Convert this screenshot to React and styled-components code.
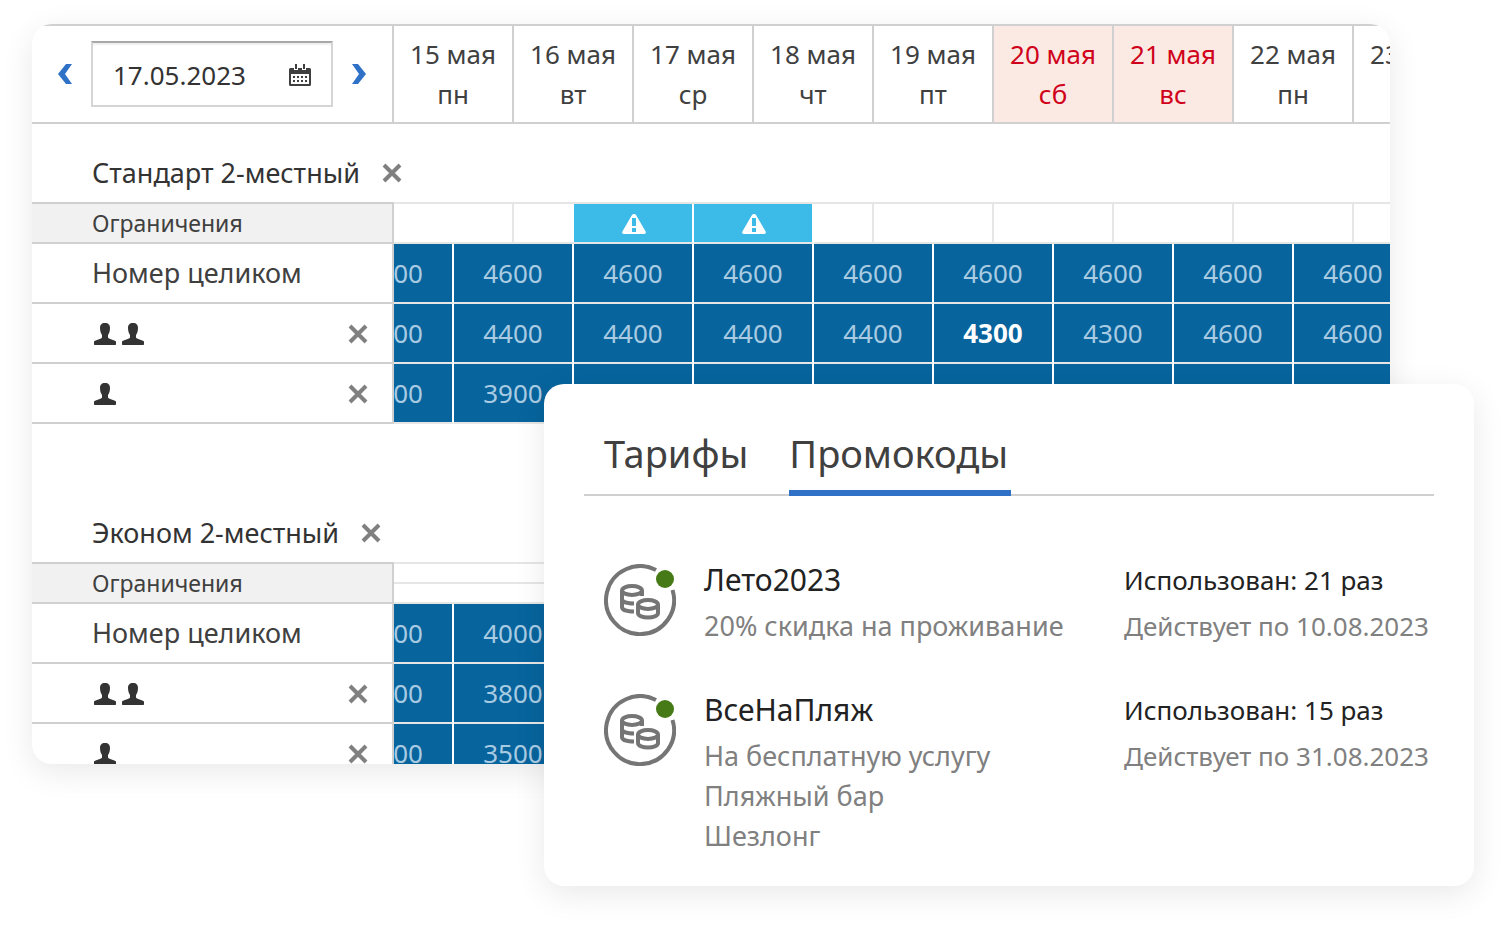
import React from "react";
import styled, { createGlobalStyle, css } from "styled-components";

const dates = [
  { date: "15 мая", day: "пн" },
  { date: "16 мая", day: "вт" },
  { date: "17 мая", day: "ср" },
  { date: "18 мая", day: "чт" },
  { date: "19 мая", day: "пт" },
  { date: "20 мая", day: "сб", weekend: true },
  { date: "21 мая", day: "вс", weekend: true },
  { date: "22 мая", day: "пн" },
  { date: "23 мая" }
];

// a date takes two columns, a night starts in the middle of its date
const restrictions = [
  { span: 2 },
  { span: 1, open: true },
  { span: 2, warning: true },
  { span: 2, warning: true },
  { span: 1 },
  { span: 2 },
  { span: 2 },
  { span: 2 },
  { span: 2 },
  { span: 2 }
];

const rooms = [
  {
    name: "Стандарт 2-местный",
    restrictions,
    rates: [
      {
        label: "Номер целиком",
        prices: [4600, 4600, 4600, 4600, 4600, 4600, 4600, 4600, 4600]
      },
      {
        guests: 2,
        prices: [4400, 4400, 4400, 4400, 4400, 4300, 4300, 4600, 4600],
        changed: 5
      },
      { guests: 1, prices: [3900, 3900] }
    ]
  },
  {
    name: "Эконом 2-местный",
    rates: [
      { label: "Номер целиком", prices: [4000, 4000] },
      { guests: 2, prices: [3800, 3800] },
      { guests: 1, prices: [3500, 3500] }
    ]
  }
];

const promocodes = [
  {
    name: "Лето2023",
    details: ["20% скидка на проживание"],
    used: "Использован: 21 раз",
    until: "Действует по 10.08.2023"
  },
  {
    name: "ВсеНаПляж",
    details: ["На бесплатную услугу", "Пляжный бар", "Шезлонг"],
    used: "Использован: 15 раз",
    until: "Действует по 31.08.2023"
  }
];

const GlobalStyle = createGlobalStyle`
  *, *::before, *::after {
    box-sizing: border-box;
  }
  body {
    margin: 0;
    background: #fff;
    color: #404040;
    font-family: "Noto Sans", "Open Sans", sans-serif;
    font-size: 26px;
    line-height: 40px;
  }
  button, input {
    font: inherit;
    color: inherit;
  }
  th, td {
    padding: 0;
    font-weight: 400;
  }
`;

const Page = styled.main`
  display: grid;
  grid-template-columns: 512px minmax(0, 1fr) 84px;
  grid-template-rows: 360px 380px auto;
  padding: 24px 32px 40px;
`;

const Card = styled.section`
  background: #fff;
  border-radius: 20px;
  box-shadow: 0 8px 32px rgba(0, 0, 0, 0.09);
`;

const Calendar = styled(Card)`
  grid-column: 1 / 3;
  grid-row: 1 / 3;
  overflow: hidden;
`;

const Grid = styled.table`
  width: 1442px;
  table-layout: fixed;
  border-collapse: separate;
  border-spacing: 0;
`;

const LabelCol = styled.col`
  width: 362px;
`;

const HalfDayCol = styled.col`
  width: 60px;
`;

const PickerCell = styled.td`
  height: 100px;
  border: solid #d0d0d0;
  border-width: 2px 2px 2px 0;
`;

const Picker = styled.div`
  display: flex;
  align-items: center;
  justify-content: center;
  gap: 19px;
`;

const IconButton = styled.button`
  display: inline-flex;
  padding: 0;
  border: 0;
  background: none;
  color: ${props => props.$color || "#808080"};
  cursor: pointer;
`;

const DateField = styled.div`
  display: flex;
  align-items: center;
  width: 242px;
  height: 66px;
  padding: 2px 20px 0;
  border: 2px solid #d5d5d5;
  border-top-color: #a8a8a8;
  box-shadow: inset 0 2px 1px #f0f0f0;
`;

const DateInput = styled.input`
  flex: 1;
  min-width: 0;
  padding: 0;
  border: 0;
  outline: 0;
  background: none;
  color: #333;
`;

const DateCell = styled.th`
  height: 100px;
  border: solid #d0d0d0;
  border-width: 2px 2px 2px 0;
  vertical-align: top;
  ${props =>
    props.$weekend &&
    css`
      background: #fbe9e3;
      color: #d0021b;
    `}
`;

const DateLine = styled.span`
  display: block;
  &:first-child {
    padding-top: 8px;
  }
`;

const lightLine = "2px solid #e6e6e6";
const darkLine = "2px solid #d0d0d0";

const RoomLabel = styled.th`
  height: 80px;
  padding-left: 60px;
  border-bottom: ${darkLine};
  font-size: 27px;
  text-align: left;
  white-space: nowrap;
`;

const RoomTitle = styled.div`
  display: flex;
  align-items: center;
  gap: 22px;
  padding-top: 20px;
  color: #333;
`;

const RoomRest = styled.td`
  border-bottom: ${lightLine};
`;

const RestrictionLabel = styled.th`
  height: 40px;
  padding-left: 60px;
  border-right: ${darkLine};
  border-bottom: ${darkLine};
  background: #f1f1f1;
  font-size: 23px;
  line-height: 38px;
  text-align: left;
`;

const RestrictionCell = styled.td`
  padding: 2px 0 0 2px;
  border-right: ${props => (props.$open ? "0" : lightLine)};
  border-bottom: ${lightLine};
  line-height: 0;
  text-align: center;
  ${props =>
    props.$warning &&
    css`
      background: #3cbbe8;
      background-clip: padding-box;
      border-right-color: #fff;
      color: #fff;
    `}
`;

const EmptyRestriction = styled.td`
  border-bottom: ${lightLine};
  vertical-align: top;
`;

const HalfLine = styled.div`
  height: 20px;
  border-bottom: ${lightLine};
`;

const RateLabel = styled.th`
  height: 60px;
  padding-left: 60px;
  border-right: ${darkLine};
  border-bottom: ${darkLine};
  font-size: 27px;
  text-align: left;
`;

const Guests = styled.div`
  display: flex;
  align-items: center;
  gap: 6px;
  padding: 2px 24px 0 2px;
  color: #333;
  button {
    margin-left: auto;
  }
`;

const PriceCell = styled.td`
  border-right: 2px solid #fff;
  border-bottom: ${lightLine};
  background: #07649d;
  background-clip: padding-box;
  color: ${props => (props.$changed ? "#fff" : "#a9cbe2")};
  text-align: center;
  && {
    font-weight: ${props => (props.$changed ? 700 : 400)};
  }
`;

const CutPrice = styled.div`
  display: flex;
  justify-content: flex-end;
  padding-right: 29px;
  overflow: hidden;
`;

const Spacer = styled.td`
  height: 60px;
`;

const Promo = styled(Card)`
  grid-column: 2 / 4;
  grid-row: 2 / 4;
  z-index: 1;
  padding: 40px 40px 30px;
`;

const Tabs = styled.div`
  display: flex;
  gap: 38px;
  padding-left: 20px;
  border-bottom: ${darkLine};
`;

const Tab = styled.button`
  height: 72px;
  margin-bottom: -2px;
  padding: 0 3px 8px 0;
  border: 0;
  border-bottom: 6px solid ${props => (props.$active ? "#3071c8" : "transparent")};
  background: none;
  font-size: 38px;
  line-height: 58px;
  cursor: pointer;
`;

const PromoList = styled.ul`
  display: grid;
  gap: 44px;
  margin: 64px 0 0;
  padding: 0 0 0 20px;
  list-style: none;
`;

const PromoItem = styled.li`
  display: grid;
  grid-template-columns: 72px minmax(0, 1fr) 310px;
  column-gap: 28px;
`;

const PromoIcon = styled.div`
  padding-top: 4px;
  line-height: 0;
`;

const PromoName = styled.h3`
  margin: 0 0 6px;
  color: #222;
  font-size: ${props => (props.$small ? 26 : 30)}px;
  font-weight: 400;
`;

const PromoText = styled.p`
  margin: 0;
  color: #808080;
  font-size: ${props => (props.$small ? 26 : 27)}px;
  white-space: nowrap;
`;

const Chevron = ({ right }) => (
  <svg width="14" height="20" viewBox="0 0 14 20" fill="currentColor" aria-hidden="true">
    <path d={right ? "M0 0h6l8 10-8 10H0l7-10z" : "M14 0H8L0 10l8 10h6L7 10z"} />
  </svg>
);

const CalendarIcon = () => (
  <svg width="22" height="22" viewBox="0 0 22 22" fill="#404040" aria-hidden="true">
    <path
      fillRule="evenodd"
      d="M1.500 4H20.500Q22 4 22 5.500V20.500Q22 22 20.500 22H1.500Q0 22 0 20.500V5.500Q0 4 1.500 4ZM2 10V20H20V10Z"
    />
    <path d="M5 4h4v2H5zm8 0h4v2h-4z" fill="#fff" />
    <path d="M6 0h2v5H6zm8 0h2v5h-2z" />
    <path d="M4 12h2v2H4zm4 0h2v2H8zm4 0h2v2h-2zm4 0h2v2h-2zM4 16h2v2H4zm4 0h2v2H8zm4 0h2v2h-2zm4 0h2v2h-2z" />
  </svg>
);

const Cross = () => (
  <svg width="20" height="20" viewBox="0 0 20 20" aria-hidden="true">
    <path d="M2 2l16 16M18 2L2 18" stroke="currentColor" strokeWidth="4" />
  </svg>
);

const Person = () => (
  <svg width="22" height="22" viewBox="0 0 22 22" fill="currentColor" aria-hidden="true">
    <path d="M11 0C7.500 0 6 2 6 5c0 3.500 1 5.500 2 7v2.500C8 16 1 17 0 18.500V21c0 .6.4 1 1 1h20c.6 0 1-.4 1-1v-2.500C21 17 14 16 14 14.500V12c1-1.500 2-3.500 2-7 0-3-1.500-5-5-5z" />
  </svg>
);

const Warning = () => (
  <svg width="24" height="20" viewBox="0 0 24 20" aria-hidden="true">
    <path
      fill="currentColor"
      fillRule="evenodd"
      d="M12 0c1 0 1.700.4 2.200 1.200l9.400 16.400c.7 1.200 0 2.400-1.400 2.400H1.800C.4 20-.3 18.800.4 17.600L9.800 1.200C10.300.4 11 0 12 0zM10 4v8h4V4zm0 10v4h4v-4z"
    />
  </svg>
);

const Coins = () => (
  <svg width="72" height="72" viewBox="0 0 72 72" fill="none" aria-hidden="true">
    <g stroke="#757575" strokeWidth="4">
      <path d="M52 6.100A34 34 0 1 0 68.500 26" />
      <ellipse cx="28" cy="26.500" rx="10" ry="4.500" />
      <path d="M18 27v16c0 3 5 4.500 12 4.500M18 35c0 3 5 4.500 12 4.500M38 27v5" />
      <ellipse cx="44" cy="40.500" rx="10" ry="4.500" />
      <path d="M34 41v8c0 3 5 4.500 10 4.500s10-1.500 10-4.500V41" />
    </g>
    <circle cx="61" cy="15" r="9" fill="#467a16" />
  </svg>
);

function Rate({ rate }) {
  return (
    <tr>
      <RateLabel scope="row">
        {rate.label || (
          <Guests>
            {Array.from({ length: rate.guests }, (_, i) => (
              <Person key={i} />
            ))}
            <IconButton type="button" aria-label="Удалить">
              <Cross />
            </IconButton>
          </Guests>
        )}
      </RateLabel>
      {dates.map((item, i) => (
        <PriceCell key={item.date} colSpan={i ? 2 : 1} $changed={rate.changed === i}>
          {i ? rate.prices[i] : <CutPrice>{rate.prices[i]}</CutPrice>}
        </PriceCell>
      ))}
    </tr>
  );
}

function Room({ room }) {
  return (
    <tbody>
      <tr>
        <RoomLabel scope="rowgroup">
          <RoomTitle>
            {room.name}
            <IconButton type="button" aria-label="Удалить">
              <Cross />
            </IconButton>
          </RoomTitle>
        </RoomLabel>
        <RoomRest colSpan={18} />
      </tr>
      <tr>
        <RestrictionLabel scope="row">Ограничения</RestrictionLabel>
        {room.restrictions ? (
          room.restrictions.map((item, i) => (
            <RestrictionCell
              key={i}
              colSpan={item.span}
              $open={item.open}
              $warning={item.warning}
            >
              {item.warning && <Warning />}
            </RestrictionCell>
          ))
        ) : (
          <EmptyRestriction colSpan={18}>
            <HalfLine />
          </EmptyRestriction>
        )}
      </tr>
      {room.rates.map((rate, i) => (
        <Rate key={i} rate={rate} />
      ))}
      <tr>
        <Spacer colSpan={19} />
      </tr>
    </tbody>
  );
}

function RateCalendar() {
  return (
    <Calendar>
      <Grid>
        <colgroup>
          <LabelCol />
          {Array.from({ length: 18 }, (_, i) => (
            <HalfDayCol key={i} />
          ))}
        </colgroup>
        <thead>
          <tr>
            <PickerCell>
              <Picker>
                <IconButton type="button" $color="#3071c8" aria-label="Назад">
                  <Chevron />
                </IconButton>
                <DateField>
                  <DateInput type="text" defaultValue="17.05.2023" aria-label="Дата" />
                  <IconButton type="button" aria-label="Календарь">
                    <CalendarIcon />
                  </IconButton>
                </DateField>
                <IconButton type="button" $color="#3071c8" aria-label="Вперёд">
                  <Chevron right />
                </IconButton>
              </Picker>
            </PickerCell>
            {dates.map(item => (
              <DateCell key={item.date} colSpan={2} scope="col" $weekend={item.weekend}>
                <DateLine>{item.date}</DateLine>
                {item.day && <DateLine>{item.day}</DateLine>}
              </DateCell>
            ))}
          </tr>
        </thead>
        {rooms.map(room => (
          <Room key={room.name} room={room} />
        ))}
      </Grid>
    </Calendar>
  );
}

function Promocodes() {
  return (
    <Promo>
      <Tabs role="tablist">
        <Tab type="button" role="tab" aria-selected="false">
          Тарифы
        </Tab>
        <Tab type="button" role="tab" aria-selected="true" $active>
          Промокоды
        </Tab>
      </Tabs>
      <PromoList>
        {promocodes.map(item => (
          <PromoItem key={item.name}>
            <PromoIcon>
              <Coins />
            </PromoIcon>
            <div>
              <PromoName>{item.name}</PromoName>
              {item.details.map(line => (
                <PromoText key={line}>{line}</PromoText>
              ))}
            </div>
            <div>
              <PromoName as="p" $small>
                {item.used}
              </PromoName>
              <PromoText $small>{item.until}</PromoText>
            </div>
          </PromoItem>
        ))}
      </PromoList>
    </Promo>
  );
}

export default function App() {
  return (
    <React.Fragment>
      <GlobalStyle />
      <Page>
        <RateCalendar />
        <Promocodes />
      </Page>
    </React.Fragment>
  );
}
